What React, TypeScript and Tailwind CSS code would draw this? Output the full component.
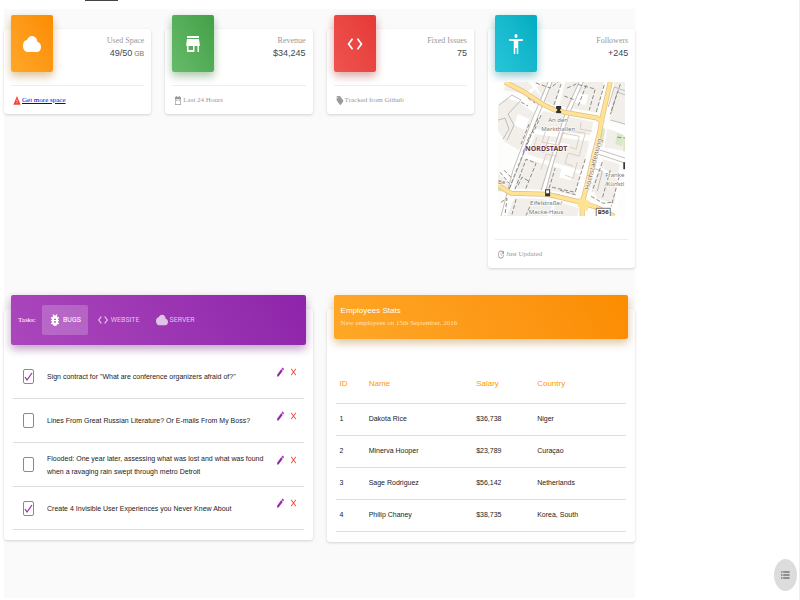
import { useState, type ReactNode } from "react";
import type { IconType } from "react-icons";
import {
  MdAccessibility,
  MdBugReport,
  MdClose,
  MdCloud,
  MdCode,
  MdDateRange,
  MdEdit,
  MdFormatListBulleted,
  MdLocalOffer,
  MdStore,
  MdUpdate,
  MdWarning,
} from "react-icons/md";

const cardClass =
  "min-w-0 rounded-[3px] bg-white shadow-[0_1px_3px_rgba(0,0,0,0.16)]";
const sans = "font-['Liberation_Sans',sans-serif]";
const serif = "font-['Liberation_Serif',serif]";

function StreetMap() {
  return (
    <svg
      viewBox="0 0 127 134"
      className="block w-full"
      role="img"
      aria-label="Street map of Nordstadt"
    >
      <rect width="127" height="134" fill="#fdfdfc" />
      <g fill="#f2efeb">
        <path d="M8 0H30L46 18 39 23 26 12 6 8Z" />
        <path d="M0 24 12 14 36 31 21 68 7 60 0 48Z" />
        <path d="M36 0H63L57 24 46 19Z" />
        <path d="M67 0H106L99 31 61 24Z" />
        <path d="M45 29 95 40 92 53 37 47Z" />
        <path d="M37 52 91 59 84 89 29 72Z" />
        <path d="M26 76 82 92 77 113 52 108 16 106 22 80Z" />
        <path d="M0 91 13 103 11 108 0 101Z" />
        <path d="M105 77 121 82 116 122 99 116 93 104Z" />
        <path d="M16 116 47 117 54 124 50 134H9Z" />
        <path d="M59 119 81 126 79 134H53Z" />
        <path d="M109 47 127 51V69L106 65Z" />
        <path d="M116 0H127V43L111 37Z" />
      </g>
      <g fill="#fff">
        <path d="M20 32 31 37 27 48 16 43Z" />
        <path d="M76 10 90 13 87 23 74 20Z" />
        <path d="M64 84 76 87 73 98 61 95Z" />
        <path d="M51 59 71 62 69 67 49 64Z" />
      </g>
      <g fill="#d5e8c8">
        <path d="M119 51 125 53 124 64 117 62Z" />
        <path d="M104 46 107 47 104 65 101 63Z" />
        <path d="M0 101 5 104 6 109H0Z" />
        <path d="M125 57H127V69H125Z" />
      </g>
      <g fill="none" stroke="#fff" strokeWidth="3">
        <path d="M52 0 36 39 16 91 5 134" />
        <path d="M83 0 69 32 54 78 45 111" />
        <path d="M46 22 21 75 12 109" />
        <path d="M0 12 23 19 42 0" />
        <path d="M35 49 92 57M24 73 86 91" />
        <path d="M98 67 127 78M95 83 122 97 116 132" />
        <path d="M101 40 127 52" />
      </g>
      <g fill="none" stroke="#aaa5a2" strokeWidth=".7">
        <path d="M50 0 35 35 15 88 3 134M54 0 38 39 18 91 10 110" />
        <path d="M81 0 68 28 53 76 43 108M85 0 71 32 56 78 48 107" />
        <path d="M1 23 14 13 23 18 10 32 16 43 9 58M0 38 7 36 11 47 5 57" />
        <path d="M110 25 116 5 127 9M113 31 119 10 127 13M112 38 127 42" />
        <path d="M99 67 127 76M97 71 127 81M92 85 104 89 99 109" />
      </g>
      <g fill="none" stroke="#75706e" strokeWidth=".8" strokeDasharray="4 2">
        <path d="M38 1 52 6 60 0M69 6 78 2 97 7 91 28M66 14 77 18" />
        <path d="M63 2 55 25M106 3 98 30M88 3 80 24M122 2 112 32" />
        <path d="M23 20 30 24M30 16 37 21M43 33 35 51M31 42 23 62" />
        <path d="M17 107 28 77 38 81 27 108M2 90 11 101M6 88 13 95" />
        <path d="M18 117 14 132M34 119 28 133M51 106 57 86M62 108 79 113" />
        <path d="M54 105 77 110 87 77M104 80 94 109M112 88 104 116M121 94 113 124" />
        <path d="M93 114 105 121 113 120M3 120 9 116 7 133M119 55 127 56" />
        <path d="M40 36 20 84 9 112M25 70 32 52M58 112 80 118M20 103 24 95 31 99" />
      </g>
      <g fill="none" stroke="#d9c9bf" strokeWidth=".9">
        <path d="M48 47 44 60 60 63 65 48 87 51 81 74 70 71 67 81 75 84" />
        <path d="M64 51 81 54 78 67 72 65M59 74 48 72 43 87M79 80 75 96 67 93" />
        <path d="M39 55 35 67 46 70 51 54M83 40 82 47 94 49" />
      </g>
      <g fill="none" strokeLinejoin="round">
        <g stroke="#e3bd87" strokeWidth="5">
          <path d="M7 0 26 10 46 23 59 29 99 36 105 41" />
          <path d="M112 0 104 35 101 52 96 71 89 101 84 121V134" />
          <path d="M0 103 13 111 49 112 83 120 98 125 116 134" />
        </g>
        <g stroke="#ffe394" strokeWidth="3.6">
          <path d="M7 0 26 10 46 23 59 29 99 36 105 41" />
          <path d="M112 0 104 35 101 52 96 71 89 101 84 121V134" />
          <path d="M0 103 13 111 49 112 83 120 98 125 116 134" />
        </g>
      </g>
      <path d="M81 115 92 119 89 129 79 124Z" fill="#ffe394" />
      <g fill="#333">
        <path d="M58 24H63V27H62V29H63V31H58V29H59V27H58Z" />
        <path d="M47 107H52V114H47Z" />
        <path d="M125 80H127V87H125Z" />
      </g>
      <path d="M48 108H51V111H48Z" fill="#fff" />
      <g
        fill="#777"
        stroke="#fff"
        strokeWidth="1"
        paintOrder="stroke"
        fontFamily="'Noto Sans', sans-serif"
        fontSize="6"
      >
        <text x="60" y="40" textAnchor="middle">An den</text>
        <text x="60" y="49" textAnchor="middle">Markthallen</text>
        <text x="48" y="123" textAnchor="middle">Eifelstraße/</text>
        <text x="48" y="132" textAnchor="middle">Macke-Haus</text>
        <text x="126" y="95" textAnchor="end">Franke</text>
        <text x="126" y="104" textAnchor="end">Künstl</text>
        <text x="0" y="102">Be</text>
        <text x="91" y="108" fill="#8b7758" fontSize="7" transform="rotate(-76 91 108)">
          Hochstadenring
        </text>
        <text x="27" y="69" fill="#703642" fontSize="7" fontWeight="700">
          NORDSTADT
        </text>
      </g>
      <rect x="98" y="126" width="14" height="9" fill="#fff" stroke="#777" />
      <text
        x="105"
        y="132"
        textAnchor="middle"
        fontFamily="'Noto Sans', sans-serif"
        fontSize="6"
        fontWeight="700"
        fill="#333"
      >
        B56
      </text>
    </svg>
  );
}

type StatProps = {
  icon: IconType;
  tile: string;
  label: string;
  value: string;
  unit?: string;
  footerIcon: IconType;
  footerIconClass?: string;
  footer: ReactNode;
  children?: ReactNode;
};

function StatCard({
  icon: Icon,
  tile,
  label,
  value,
  unit,
  footerIcon: FooterIcon,
  footerIconClass = "text-[#999]",
  footer,
  children,
}: StatProps) {
  return (
    <article className={`${cardClass} px-[7px]`}>
      <div className="flex h-[43px] items-start justify-between">
        <div
          className={`-mt-[14px] flex h-[57px] w-[42px] items-center justify-center rounded-[2px] bg-linear-60 text-white ${tile}`}
        >
          <Icon preserveAspectRatio="none" className="h-6 w-[18px]" />
        </div>
        <div className="pt-[6px] text-right">
          <p className={`${serif} text-[8px] leading-[12px] text-[#999]`}>{label}</p>
          <h3 className={`${sans} text-[9px] leading-[12px] text-[#3c4858]`}>
            {value}
            {unit && <small className="ml-0.5 text-[7px] text-[#777]">{unit}</small>}
          </h3>
        </div>
      </div>
      {children}
      <footer
        className={`${serif} mt-[13px] flex h-[29px] items-center gap-px border-t border-[#eee] pl-0.5 text-[7px] text-[#999]`}
      >
        <FooterIcon
          preserveAspectRatio="none"
          className={`h-[11px] w-2 ${footerIconClass}`}
        />
        {footer}
      </footer>
    </article>
  );
}

const tabs: { name: string; icon: IconType }[] = [
  { name: "BUGS", icon: MdBugReport },
  { name: "WEBSITE", icon: MdCode },
  { name: "SERVER", icon: MdCloud },
];

const tasks = [
  { text: 'Sign contract for "What are conference organizers afraid of?"', done: true },
  { text: "Lines From Great Russian Literature? Or E-mails From My Boss?", done: false },
  {
    text: "Flooded: One year later, assessing what was lost and what was found when a ravaging rain swept through metro Detroit",
    done: false,
  },
  { text: "Create 4 Invisible User Experiences you Never Knew About", done: true },
];

function TaskRow({ id, text, done }: { id: string; text: string; done: boolean }) {
  return (
    <li className="flex h-[44px] items-center border-b border-[#ddd] pl-[10px] pr-[6px] last:h-[43px]">
      <span className="relative h-[15px] w-[11px] shrink-0">
        <input
          id={id}
          type="checkbox"
          defaultChecked={done}
          className="peer block h-[15px] w-[11px] appearance-none rounded-[2px] border border-[#8a8a8a] bg-white"
        />
        <svg
          viewBox="0 0 11 15"
          className="pointer-events-none absolute inset-0 hidden h-[15px] w-[11px] peer-checked:block"
        >
          <path d="M2 8 4 11 9 4" fill="none" stroke="#9c27b0" strokeWidth="1.2" />
        </svg>
      </span>
      <label
        htmlFor={id}
        className={`${sans} ml-[13px] min-w-0 flex-1 text-[7px] leading-[13px] text-[#222]`}
      >
        {text}
      </label>
      <div className="mb-[10px] ml-2 flex gap-1">
        <button type="button" aria-label="Edit task" className="text-[#9c27b0]">
          <MdEdit preserveAspectRatio="none" className="h-3 w-[9px]" />
        </button>
        <button type="button" aria-label="Remove task" className="text-[#f44336]">
          <MdClose preserveAspectRatio="none" className="h-3 w-[9px]" />
        </button>
      </div>
    </li>
  );
}

function TasksCard() {
  const [active, setActive] = useState("BUGS");
  return (
    <section className={`${cardClass} px-[7px] pb-[10px]`}>
      <header className="-mt-[14px] flex h-[50px] items-center rounded-[2px] bg-linear-60 from-[#ab47bc] to-[#8e24aa] px-[7px] text-white shadow-[0_4px_10px_rgba(0,0,0,0.14),0_4px_8px_rgba(156,39,176,0.3)]">
        <span className={`${serif} w-6 text-[7px]`}>Tasks:</span>
        <div role="tablist" className="flex gap-[2px]">
          {tabs.map(({ name, icon: Icon }) => (
            <button
              key={name}
              type="button"
              role="tab"
              aria-selected={active === name}
              onClick={() => setActive(name)}
              className={`font-[Roboto,sans-serif] flex h-[30px] items-center gap-[2px] rounded-[2px] px-[7px] text-[7px] aria-selected:bg-white/20 ${
                active === name ? "text-white" : "text-white/70"
              }`}
            >
              <Icon preserveAspectRatio="none" className="h-4 w-3" />
              {name}
            </button>
          ))}
        </div>
      </header>
      <ul className="mx-[2px] mt-[10px]">
        {tasks.map((task, index) => (
          <TaskRow key={task.text} id={`task-${index}`} {...task} />
        ))}
      </ul>
    </section>
  );
}

const employees = [
  ["1", "Dakota Rice", "$36,738", "Niger"],
  ["2", "Minerva Hooper", "$23,789", "Curaçao"],
  ["3", "Sage Rodriguez", "$56,142", "Netherlands"],
  ["4", "Philip Chaney", "$38,735", "Korea, South"],
];

function EmployeesCard() {
  return (
    <section className={`${cardClass} px-[7px] pb-[10px]`}>
      <header className="-mt-[14px] h-[44px] rounded-[2px] bg-linear-60 from-[#ffa726] to-[#fb8c00] px-[7px] pt-[10px] shadow-[0_4px_10px_rgba(0,0,0,0.14),0_4px_8px_rgba(255,152,0,0.25)]">
        <h4 className={`${sans} text-[8px] leading-[12px] text-white`}>Employees Stats</h4>
        <p className={`${serif} text-[7px] leading-[12px] text-white/70`}>
          New employees on 15th September, 2016
        </p>
      </header>
      <div className="px-[2px] pt-[26px]">
        <table
          className={`${sans} w-full table-fixed border-collapse text-left text-[7px] text-[#222]`}
        >
          <thead>
            <tr className="h-[38px] border-b border-[#ddd] text-[8px] text-[#ff9800]">
              <th scope="col" className="w-[10%] pl-1 font-normal">ID</th>
              <th scope="col" className="w-[37%] pl-1 font-normal">Name</th>
              <th scope="col" className="w-[21%] pl-1 font-normal">Salary</th>
              <th scope="col" className="pl-1 font-normal">Country</th>
            </tr>
          </thead>
          <tbody>
            {employees.map((row) => (
              <tr key={row[0]} className="h-8 border-b border-[#ddd]">
                {row.map((cell) => (
                  <td key={cell} className="pl-1">{cell}</td>
                ))}
              </tr>
            ))}
          </tbody>
        </table>
      </div>
    </section>
  );
}

export default function App() {
  return (
    <div className="min-h-screen border-r border-[#eee] bg-white pb-[2px] pl-1">
      <div className="h-[9px]">
        <div className="ml-[81px] h-px w-[33px] bg-[#444]" />
      </div>
      <main className="min-h-[589px] w-[79.4%] bg-[#fafafa] pt-5">
        <div className="grid grid-cols-4 items-start gap-[14px]">
          <StatCard
            icon={MdCloud}
            tile="from-[#ffa726] to-[#fb8c00] shadow-[0_4px_10px_rgba(0,0,0,0.14),0_4px_8px_rgba(255,152,0,0.3)]"
            label="Used Space"
            value="49/50"
            unit="GB"
            footerIcon={MdWarning}
            footerIconClass="text-[#f44336]"
            footer={
              <a href="#space" className="text-[#0000ee] underline">
                Get more space
              </a>
            }
          />
          <StatCard
            icon={MdStore}
            tile="from-[#66bb6a] to-[#43a047] shadow-[0_4px_10px_rgba(0,0,0,0.14),0_4px_8px_rgba(76,175,80,0.3)]"
            label="Revenue"
            value="$34,245"
            footerIcon={MdDateRange}
            footer="Last 24 Hours"
          />
          <StatCard
            icon={MdCode}
            tile="from-[#ef5350] to-[#e53935] shadow-[0_4px_10px_rgba(0,0,0,0.14),0_4px_8px_rgba(244,67,54,0.3)]"
            label="Fixed Issues"
            value="75"
            footerIcon={MdLocalOffer}
            footer="Tracked from Github"
          />
          <StatCard
            icon={MdAccessibility}
            tile="from-[#26c6da] to-[#00acc1] shadow-[0_4px_10px_rgba(0,0,0,0.14),0_4px_8px_rgba(0,188,212,0.3)]"
            label="Followers"
            value="+245"
            footerIcon={MdUpdate}
            footer="Just Updated"
          >
            <div className="mb-[23px] mt-[10px] px-[3px]">
              <StreetMap />
            </div>
          </StatCard>
        </div>
        <div className="mt-[41px] grid grid-cols-2 items-start gap-[14px]">
          <TasksCard />
          <EmployeesCard />
        </div>
      </main>
      <button
        type="button"
        aria-label="Open menu"
        className="fixed bottom-[9px] right-[3px] flex h-8 w-[23px] items-center justify-center rounded-[50%] bg-[#dcdcdc] text-[#444]"
      >
        <MdFormatListBulleted preserveAspectRatio="none" className="h-3 w-[11px]" />
      </button>
    </div>
  );
}
